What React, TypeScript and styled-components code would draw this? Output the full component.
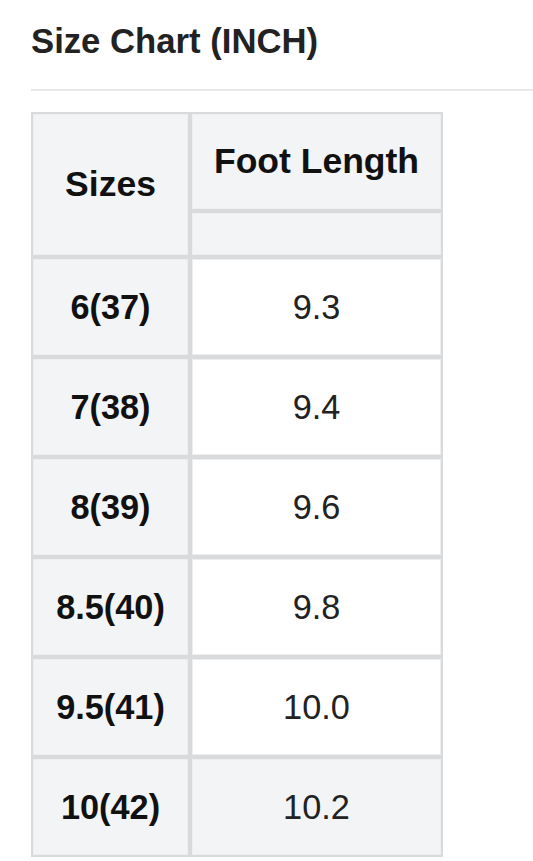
import React from "react";
import styled, { createGlobalStyle } from "styled-components";

const GlobalStyle = createGlobalStyle`
  html, body {
    margin: 0;
    padding: 0;
    background: #ffffff;
  }
  body {
    font-family: "Liberation Sans", Arial, Helvetica, sans-serif;
  }
`;

const Page = styled.div`
  padding-left: 31px;
  width: 502px;
`;

const Title = styled.h2`
  margin: 21px 0 0;
  font-size: 34.7px;
  line-height: 40px;
  font-weight: 700;
  color: #222222;
`;

const Divider = styled.hr`
  margin: 28px 0 0;
  border: none;
  height: 2px;
  background: #e8e8e9;
`;

const Chart = styled.table`
  margin-top: 21px;
  border-collapse: separate;
  border-spacing: 0;
  table-layout: fixed;
  width: 412px;
`;

const Cell = styled.td<{ $shade?: boolean; $bold?: boolean; $h: number; $big?: boolean }>`
  box-sizing: border-box;
  height: ${(p) => p.$h}px;
  padding: 0;
  border: 2px solid #d9dadc;
  box-shadow: inset 0 0 0 1px #eceef0;
  background: ${(p) => (p.$shade ? "#f3f4f6" : "#ffffff")};
  text-align: center;
  vertical-align: middle;
  font-size: ${(p) => (p.$big ? 35.5 : 34.3)}px;
  font-weight: ${(p) => (p.$bold ? 700 : 400)};
  color: ${(p) => (p.$bold ? "#111111" : "#222222")};
`;

const rows = [
  { size: "6(37)", foot: "9.3" },
  { size: "7(38)", foot: "9.4" },
  { size: "8(39)", foot: "9.6" },
  { size: "8.5(40)", foot: "9.8" },
  { size: "9.5(41)", foot: "10.0" },
  { size: "10(42)", foot: "10.2" },
];

export default function App() {
  return (
    <>
      <GlobalStyle />
      <Page>
        <Title>Size Chart (INCH)</Title>
        <Divider />
        <Chart>
          <colgroup>
            <col style={{ width: 159 }} />
            <col style={{ width: 253 }} />
          </colgroup>
          <tbody>
            <tr>
              <Cell as="th" rowSpan={2} $shade $bold $big $h={99}>
                Sizes
              </Cell>
              <Cell as="th" $shade $bold $big $h={99}>
                Foot Length
              </Cell>
            </tr>
            <tr>
              <Cell $shade $h={46} />
            </tr>
            {rows.map((r, i) => (
              <tr key={r.size}>
                <Cell $shade $bold $h={100}>
                  {r.size}
                </Cell>
                <Cell $shade={i === rows.length - 1} $h={100}>
                  {r.foot}
                </Cell>
              </tr>
            ))}
          </tbody>
        </Chart>
      </Page>
    </>
  );
}
